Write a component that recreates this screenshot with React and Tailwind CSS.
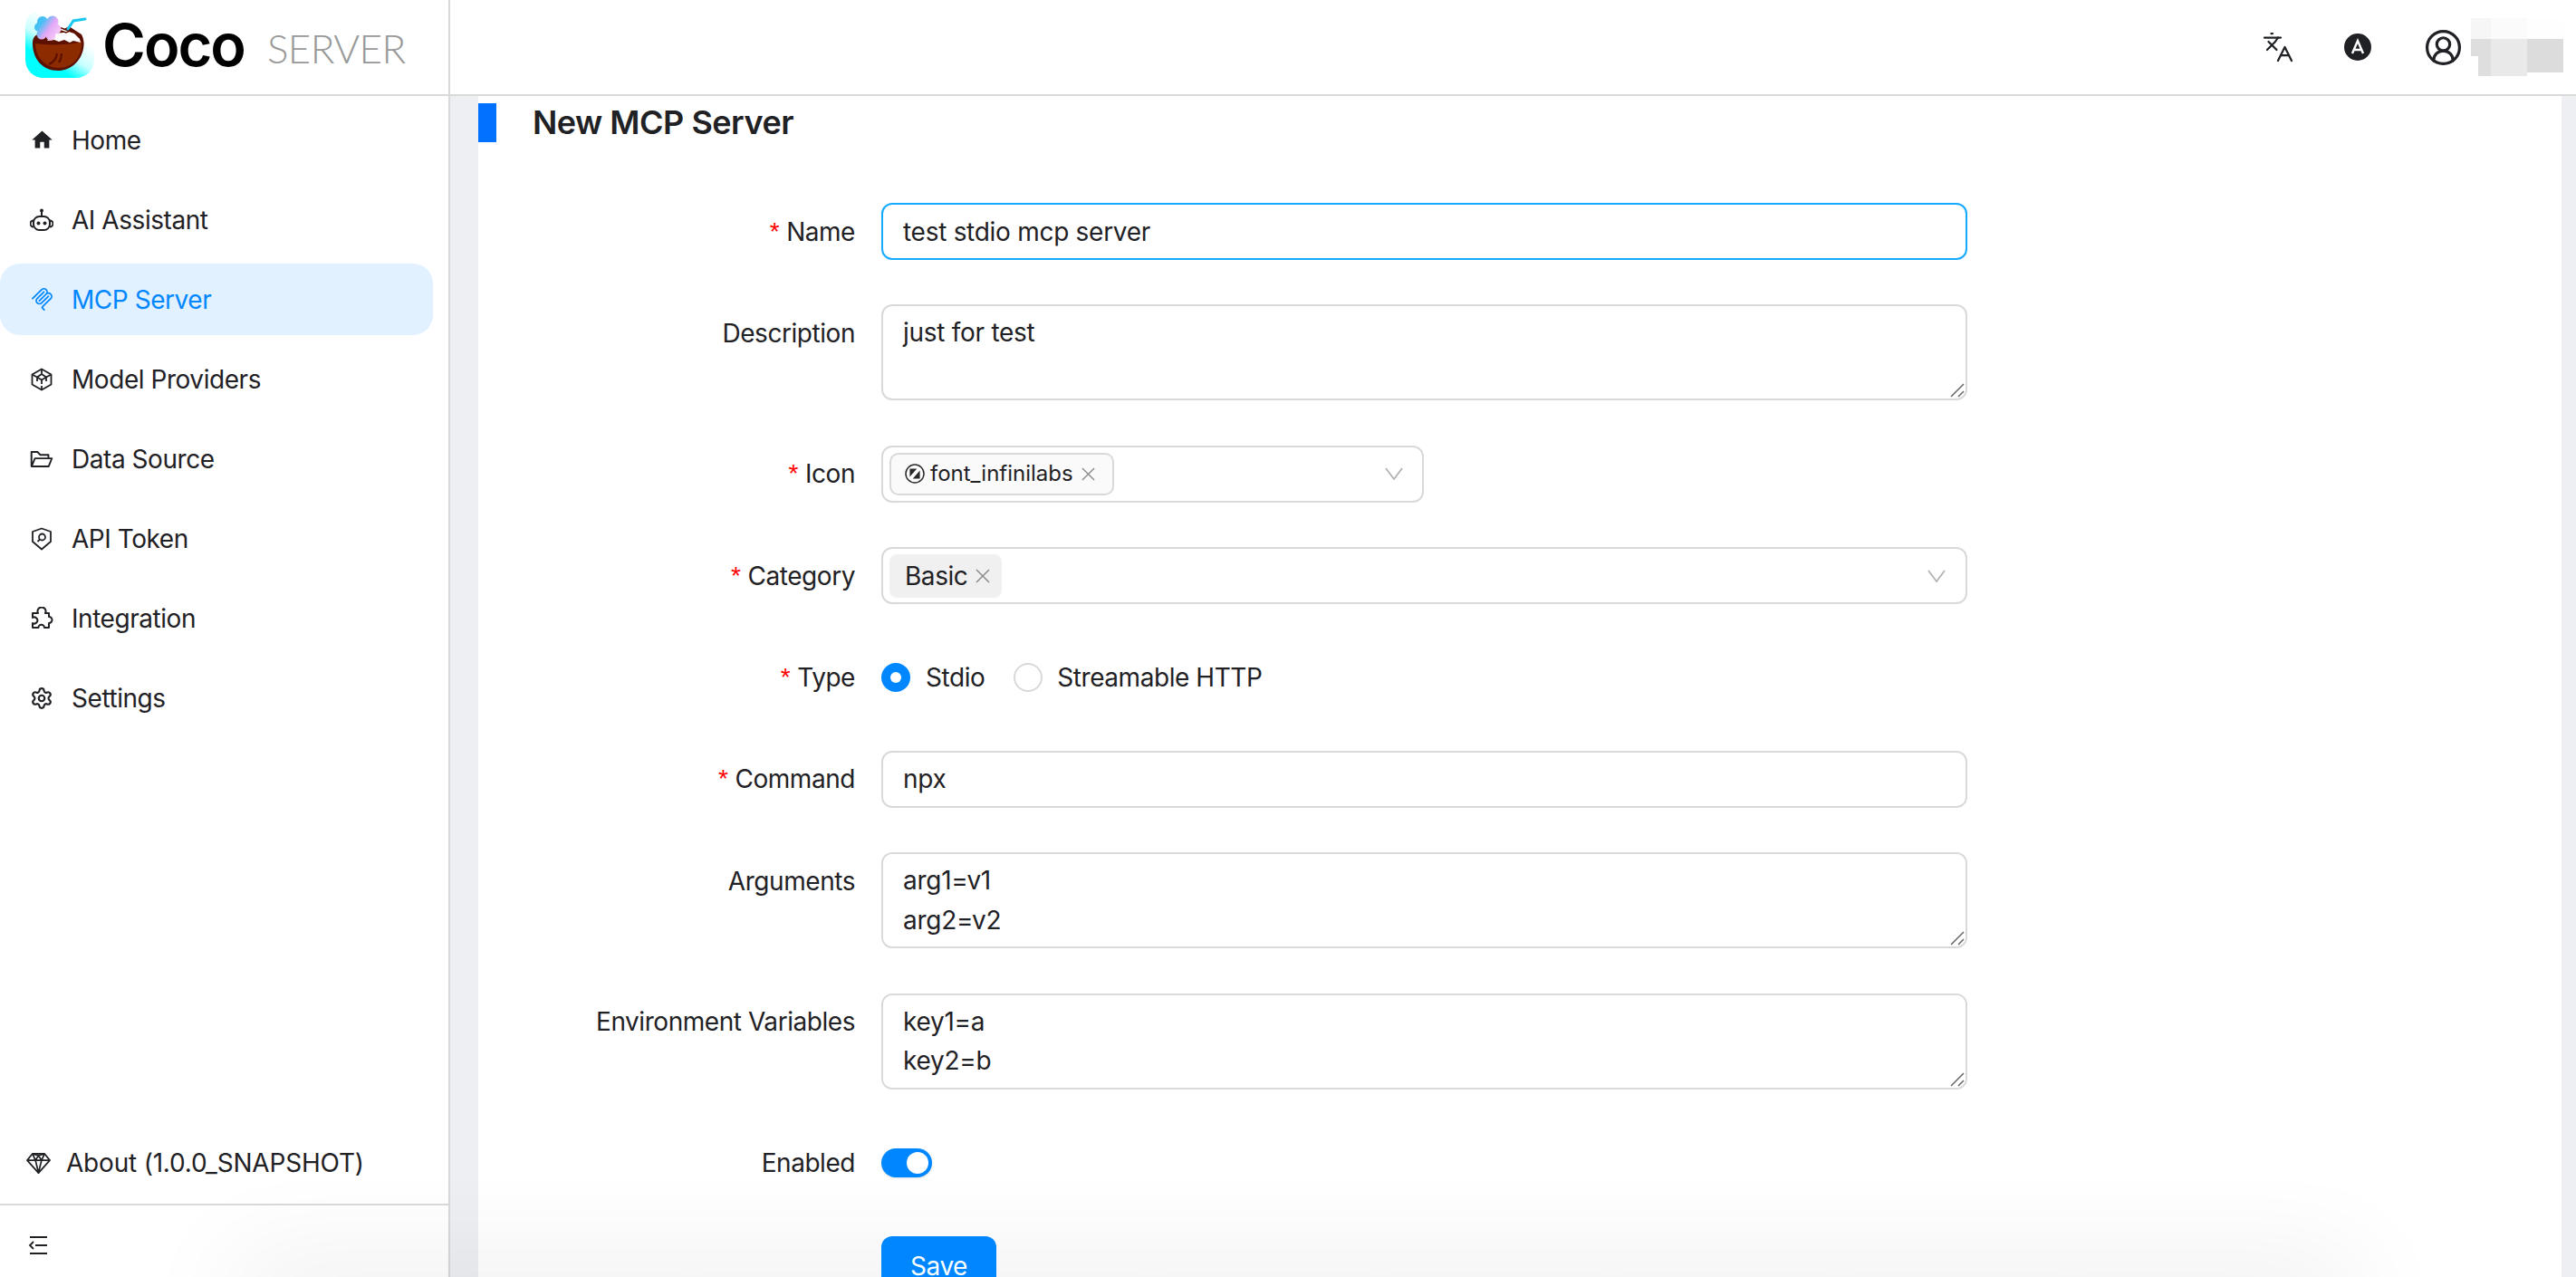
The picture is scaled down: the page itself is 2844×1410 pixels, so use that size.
import { Languages, CircleUserRound, Settings } from 'lucide-react';
import { MdHome } from 'react-icons/md';
import { AiOutlineFolderOpen } from 'react-icons/ai';

const BotIcon = () => (
    <svg viewBox="0 0 26 26" className="w-[26px] h-[26px]" fill="none" stroke="currentColor" strokeWidth="2">
        <circle cx="13" cy="2.500" r="2" fill="currentColor" stroke="none" />
        <path d="M13 4v5" />
        <rect x="4" y="9" width="18" height="15" rx="6.500" />
        <path d="M4 13.500a3.500 3.500 0 0 0 0 7M22 13.500a3.500 3.500 0 0 1 0 7" />
        <circle cx="9.500" cy="16.500" r="2" fill="currentColor" stroke="none" />
        <circle cx="16.500" cy="16.500" r="2" fill="currentColor" stroke="none" />
    </svg>
);

const McpIcon = () => (
    <svg viewBox="0 0 24 24" className="w-[25px] h-[25px]" fill="currentColor">
        <path d="M15.688 2.343a2.588 2.588 0 00-3.61 0l-9.626 9.44a.863.863 0 01-1.203 0 .823.823 0 010-1.18l9.626-9.44a4.313 4.313 0 016.016 0 4.116 4.116 0 011.204 3.54 4.3 4.3 0 013.609 1.18l.05.05a4.115 4.115 0 010 5.9l-8.706 8.537a.274.274 0 000 .393l1.788 1.754a.823.823 0 010 1.18.863.863 0 01-1.203 0l-1.788-1.753a1.92 1.92 0 010-2.754l8.706-8.538a2.47 2.47 0 000-3.54l-.05-.049a2.588 2.588 0 00-3.607-.003l-7.172 7.034-.002.002-.098.097a.863.863 0 01-1.204 0 .823.823 0 010-1.18l7.273-7.133a2.47 2.47 0 00-.003-3.537z" />
        <path d="M14.485 4.703a.823.823 0 000-1.18.863.863 0 00-1.204 0l-7.119 6.982a4.115 4.115 0 000 5.9 4.314 4.314 0 006.016 0l7.12-6.982a.823.823 0 000-1.18.863.863 0 00-1.204 0l-7.119 6.982a2.588 2.588 0 01-3.61 0 2.47 2.47 0 010-3.54l7.12-6.982z" />
    </svg>
);

const CubeIcon = () => (
    <svg viewBox="0 0 26 26" className="w-[26px] h-[26px]" fill="none" stroke="currentColor" strokeWidth="1.800" strokeLinejoin="round">
        <path d="M13 1.500l10.500 6v11l-10.500 6-10.500-6v-11z" />
        <path d="M13 1.500V7M2.500 7.500L8 10.500M23.500 7.500L18 10.500M8 10.500l5-3.500 5 3.500-5 3zM13 13.500V18M13 20v4.500M8 10.500V15M18 10.500V15" />
    </svg>
);

const ShieldIcon = () => (
    <svg viewBox="0 0 24 26" className="w-[24px] h-[26px]" fill="none" stroke="currentColor" strokeWidth="1.800" strokeLinejoin="round">
        <path d="M12 1.500l10 3.500v11l-10 8.500-10-8.500V5z" />
        <circle cx="12.500" cy="11" r="3.500" />
        <path d="M10 13.500l-2.500 2.500" />
    </svg>
);

const PuzzleIcon = () => (
    <svg viewBox="0 0 26 26" className="w-[26px] h-[26px]" fill="none" stroke="currentColor" strokeWidth="2" strokeLinejoin="round">
        <path d="M3 7h6a4.500 4.500 0 1 1 8 0h4v4a3.500 3.500 0 1 1 0 7v5h-5a3.300 3.300 0 1 0-6.600 0H3v-5a3.500 3.500 0 1 0 0-6z" />
    </svg>
);

const GemIcon = () => (
    <svg viewBox="0 0 28 26" className="w-[27px] h-[25px]" fill="none" stroke="currentColor" strokeWidth="1.800" strokeLinejoin="round">
        <path d="M7 2h14l6 7.500L14 24 1 9.500z" />
        <path d="M1 9.500h26M7 2l3.500 7.500L14 24l3.500-14.500L21 2M10.500 9.500L14 4l3.500 5.500M7 2l7 2 7-2" />
    </svg>
);

const CollapseIcon = () => (
    <svg viewBox="0 0 22 22" className="w-[22px] h-[22px]" fill="none" stroke="currentColor" strokeWidth="2.200">
        <path d="M2 2h19M8 11h13M2 20h19" />
        <path d="M6 7l-4 4 4 4" strokeWidth="1.800" />
    </svg>
);

const ThemeIcon = () => (
    <svg viewBox="0 0 30 30" className="w-[30px] h-[30px]">
        <circle cx="15" cy="15" r="15" fill="#1f2125" />
        <path d="M9 22L15 8l6 14M11 18h8" fill="none" stroke="#fff" strokeWidth="2.400" />
    </svg>
);

const InfiniIcon = () => (
    <svg viewBox="0 0 22 22" className="w-[22px] h-[22px]">
        <circle cx="11" cy="11" r="10" fill="#fff" stroke="#2a2a2a" strokeWidth="1.500" />
        <path d="M6 6v7l6-7zM16 16V9l-6 7z" fill="#2a2a2a" stroke="#2a2a2a" strokeWidth="1.200" />
    </svg>
);

const CloseIcon = ({ size }) => (
    <svg viewBox="0 0 16 16" style={{ width: size, height: size }} className="shrink-0" fill="none" stroke="#8c8c8c" strokeWidth="1.500">
        <path d="M1 1l14 14M15 1L1 15" />
    </svg>
);

const Logo = () => (
    <svg viewBox="28 11 76 76" className="w-[76px] h-[76px] shrink-0">
        <defs>
            <linearGradient id="logoBg" x1="0.9" y1="0" x2="0.25" y2="1">
                <stop offset="0.35" stopColor="#ffffff" />
                <stop offset="0.6" stopColor="#c8ffff" />
                <stop offset="0.8" stopColor="#00ffff" />
            </linearGradient>
            <linearGradient id="logoFlower" gradientUnits="userSpaceOnUse" x1="42" y1="22" x2="64" y2="38">
                <stop offset="0.2" stopColor="#45c0f5" />
                <stop offset="0.6" stopColor="#e2a8f7" />
                <stop offset="1" stopColor="#f5c8f5" />
            </linearGradient>
        </defs>
        <rect x="28" y="11" width="76" height="76" rx="20" fill="url(#logoBg)" />
        <path d="M36 49c0-7 3-10 8-10l20-2 12-7 14 9c3 6 3 11 2 16-3 14-14 24-28 24-17 0-28-13-28-30z" fill="#5c1000" />
        <path d="M39 49c8 1 20 2 29 1 8 0 16-1 22-3 1 17-10 29-25 29-15 0-26-12-26-27z" fill="#8c2a00" />
        <path d="M54 72c5-2 8-6 9-12M68 60c0 4-1 7-3 10" fill="none" stroke="#5c1000" strokeWidth="2.200" />
        <path d="M52 46l6-8 12-1 6-1 6 2 6 6 1 4-8-2-4 2-6-3-6 2-5-2z" fill="#fff" />
        <path d="M65 31l8 3 4 1-4 2-6-2z" fill="#fff" stroke="#5c1000" strokeWidth="1.500" />
        <path d="M75 33l6-9 13-2" fill="none" stroke="#19c8f0" strokeWidth="3" strokeLinecap="round" />
        <g fill="url(#logoFlower)">
            <circle cx="47" cy="25" r="6" />
            <circle cx="58" cy="25" r="6.500" />
            <circle cx="62" cy="33" r="5.500" />
            <circle cx="56" cy="40" r="5.500" />
            <circle cx="46" cy="39" r="5.500" />
            <circle cx="43" cy="31" r="5" />
            <circle cx="52" cy="32" r="8" />
        </g>
    </svg>
);

const navItems = [
    { label: 'Home', icon: <MdHome size={27} /> },
    { label: 'AI Assistant', icon: <BotIcon /> },
    { label: 'MCP Server', icon: <McpIcon />, active: true },
    { label: 'Model Providers', icon: <CubeIcon /> },
    { label: 'Data Source', icon: <AiOutlineFolderOpen size={28} /> },
    { label: 'API Token', icon: <ShieldIcon /> },
    { label: 'Integration', icon: <PuzzleIcon /> },
    { label: 'Settings', icon: <Settings size={26} strokeWidth={2} /> },
];

const Sidebar = () => (
    <aside className="w-[497px] shrink-0 h-full flex flex-col border-r-2 border-[#d9d9d9] bg-white">
        <div className="h-[106px] shrink-0 flex items-center pl-[28px] pb-[8px] border-b-2 border-[#d9d9d9]">
            <Logo />
            <span className="ml-[9px] mt-[2px] text-[65px] leading-none font-semibold tracking-[-2px] text-black">Coco</span>
            <span className="ml-[25px] mt-[10px] font-['Lato',sans-serif] text-[44px] leading-none font-light tracking-[-0.6px] text-[#999999]">SERVER</span>
        </div>
        <nav className="flex-1 flex flex-col gap-[9px] pt-[9px] pr-[17px]">
            {navItems.map((item) => (
                <div
                    key={item.label}
                    className={`h-[79px] flex items-center rounded-[22px] ${item.active ? 'bg-[#e1f1ff] text-[#0087ff]' : 'text-[#1f2125]'}`}
                >
                    <span className="w-[34px] ml-[29px] flex justify-center">{item.icon}</span>
                    <span className="ml-[16px]">{item.label}</span>
                </div>
            ))}
        </nav>
        <div className="h-[88px] flex items-center pl-[29px] pb-[2px] text-[#1f2125]">
            <GemIcon />
            <span className="ml-[17px] tracking-[-0.2px]">About (1.0.0_SNAPSHOT)</span>
        </div>
        <div className="h-[81px] shrink-0 border-t-2 border-[#d9d9d9] pt-[33px] pl-[31px] text-[#1f2125]">
            <CollapseIcon />
        </div>
    </aside>
);

const Header = () => (
    <header className="h-[106px] shrink-0 flex items-center justify-end pr-[14px] border-b-2 border-[#d9d9d9] bg-white text-[#1f2125]">
        <Languages size={36} strokeWidth={1.5} className="mr-[55px]" />
        <span className="mr-[58px]"><ThemeIcon /></span>
        <CircleUserRound size={43} strokeWidth={1.8} className="mr-[9px]" />
        <div className="flex h-[64px]">
            <div className="w-[22px] flex flex-col">
                <div className="h-[23px] bg-[#f6f6f6]" />
                <div className="h-[19px] bg-[#dedede]" />
                <div className="h-[22px] ml-[8px] bg-[#dedede]" />
            </div>
            <div className="w-[40px] flex flex-col">
                <div className="h-[23px] bg-[#fbfbfb]" />
                <div className="h-[41px] bg-[#e9e9e9]" />
            </div>
            <div className="w-[40px] flex flex-col">
                <div className="h-[23px] bg-[#fefefe]" />
                <div className="h-[37px] bg-[#dcdcdc] mr-0" />
            </div>
        </div>
    </header>
);

const Field = ({ label, required, height = 'h-[63px]', children }) => (
    <div className="flex">
        <div className="w-[416px] h-[63px] shrink-0 flex items-center justify-end mr-[29px] text-[#1f2125]">
            {required && <span className="text-[#ff0000] mr-[8px] font-['Liberation_Sans',sans-serif]">*</span>}
            {label}
        </div>
        <div className={`${height} flex items-center`}>{children}</div>
    </div>
);

const TextInput = ({ value, focused }) => (
    <input
        readOnly
        defaultValue={value}
        className={`w-[1199px] h-[63px] px-[22px] rounded-[12px] border-2 outline-none bg-white tracking-[-0.28px] text-[#1f2125] ${focused ? 'border-[#14aaff]' : 'border-[#d9d9d9]'}`}
    />
);

const TextBlock = ({ value }) => (
    <div className="relative w-[1199px] h-[106px]">
        <textarea
            readOnly
            defaultValue={value}
            className="w-full h-full resize-none px-[22px] py-[8px] leading-[43.500px] tracking-[-0.28px] rounded-[12px] border-2 border-[#d9d9d9] outline-none bg-white text-[#1f2125]"
        />
        <svg viewBox="0 0 16 16" className="absolute right-[3px] bottom-[3px] w-[16px] h-[16px]" stroke="#666" strokeWidth="1.500">
            <path d="M1 15L15 1M9 15l6-6" />
        </svg>
    </div>
);

const Chevron = () => (
    <svg viewBox="0 0 20 14" className="w-[20px] h-[14px]" fill="none" stroke="#b3b3b3" strokeWidth="1.800">
        <path d="M1 1l9 12 9-12" />
    </svg>
);

const App = () => (
    <div className="relative flex w-full h-[1410px] overflow-hidden bg-white font-['Inter',sans-serif] text-[28px] tracking-[-0.45px]">
        <Sidebar />
        <div className="flex-1 min-w-0 h-full flex flex-col">
            <Header />
            <main className="flex-1 min-h-0 mr-[16px] ml-[31px] bg-white overflow-hidden">
                <div className="flex h-[43px] mt-[8px]">
                    <div className="w-[20px] bg-[#0072ff]" />
                    <h1 className="ml-[40px] text-[36px] leading-[43px] font-semibold tracking-[-0.5px] text-[#1f2125]">New MCP Server</h1>
                </div>
                <form className="mt-[67px] flex flex-col gap-[49.400px]">
                    <Field label="Name" required><TextInput value="test stdio mcp server" focused /></Field>
                    <Field label="Description" height="h-[106px]"><TextBlock value="just for test" /></Field>
                    <Field label="Icon" required>
                        <div className="w-[599px] h-[63px] flex items-center justify-between pl-[7px] pr-[21px] rounded-[12px] border-2 border-[#d9d9d9]">
                            <span className="h-[47px] w-[248px] flex items-center pl-[15px] rounded-[10px] border-2 border-[#d9d9d9] bg-[#fafafa] text-[24px] tracking-normal text-[#1f2125]">
                                <InfiniIcon />
                                <span className="ml-[6px]">font_infinilabs</span>
                                <span className="ml-[9px]"><CloseIcon size={15} /></span>
                            </span>
                            <Chevron />
                        </div>
                    </Field>
                    <Field label="Category" required>
                        <div className="w-[1199px] h-[63px] flex items-center justify-between pl-[7px] pr-[22px] rounded-[12px] border-2 border-[#d9d9d9]">
                            <span className="h-[48px] w-[124px] flex items-center pl-[17px] rounded-[8px] bg-[#f0f0f0] text-[#1f2125]">
                                Basic
                                <span className="ml-[9px]"><CloseIcon size={16} /></span>
                            </span>
                            <Chevron />
                        </div>
                    </Field>
                    <Field label="Type" required>
                        <div className="flex items-center text-[#1f2125]">
                            <span className="w-[32px] h-[32px] rounded-full bg-[#0087ff] flex items-center justify-center">
                                <span className="w-[12px] h-[12px] rounded-full bg-white" />
                            </span>
                            <span className="ml-[17px]">Stdio</span>
                            <span className="ml-[32px] w-[32px] h-[32px] rounded-full border-2 border-[#d9d9d9] bg-white" />
                            <span className="ml-[16px]">Streamable HTTP</span>
                        </div>
                    </Field>
                    <Field label="Command" required><TextInput value="npx" /></Field>
                    <Field label="Arguments" height="h-[106px]"><TextBlock value={'arg1=v1\narg2=v2'} /></Field>
                    <Field label="Environment Variables" height="h-[106px]"><TextBlock value={'key1=a\nkey2=b'} /></Field>
                    <Field label="Enabled">
                        <span className="w-[56px] h-[32px] rounded-full bg-[#0087ff] flex items-center justify-end pr-[4px] shadow-sm">
                            <span className="w-[24px] h-[24px] rounded-full bg-white" />
                        </span>
                    </Field>
                    <div className="pl-[445px]">
                        <button type="button" className="relative z-10 w-[127px] h-[66px] rounded-[12px] bg-[#0087ff] text-white">Save</button>
                    </div>
                </form>
            </main>
        </div>
        {/* gutter behind the form panel, only below the header */}
        <div className="absolute left-[497px] top-[106px] bottom-0 w-[31px] bg-[#eeeff3]" />
        <div className="absolute right-0 top-[106px] bottom-0 w-[16px] bg-[#eeeff3]" />
        {/* footer shadow coming up from under the fold */}
        <div className="absolute left-[260px] top-[1410px] w-[2340px] h-[40px] shadow-[0_0_120px_rgba(0,0,0,0.14)]" />
    </div>
);

export default App;
